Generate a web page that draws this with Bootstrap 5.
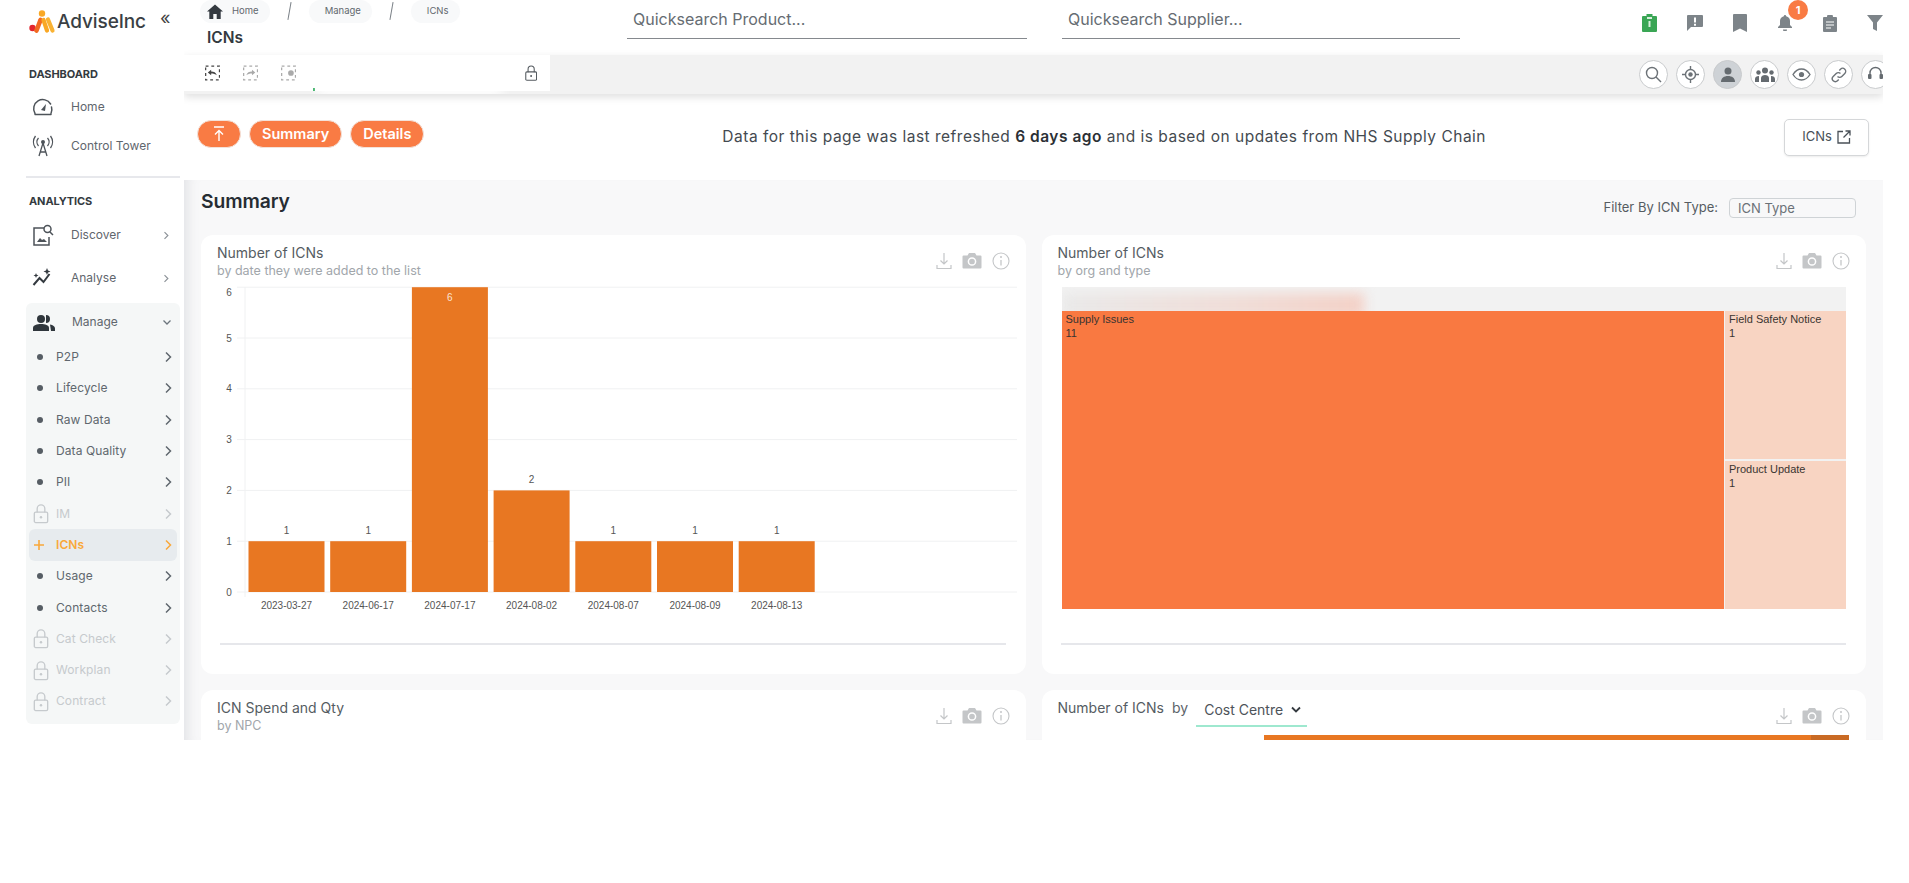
<!DOCTYPE html>
<html lang="en">
  <head>
    <meta charset="UTF-8" />
    <title>ICNs</title>
    <link rel="stylesheet" href="https://cdn.jsdelivr.net/npm/bootstrap@5.3.0/dist/css/bootstrap.min.css" />
    <style>
      body { background: #fff; font-family: Inter, "Noto Sans", sans-serif; color: #343a40; overflow: hidden; }
      .app-frame { width: 1883px; height: 740px; overflow: hidden; }

      /* sidebar */
      .side-bar { width: 184px; flex: none; background: #fff; padding: 0 4px 0 26px; position: relative; z-index: 3; }
      .logo-row { height: 64px; padding: 10px 0 0 3px; }
      .logo-word { font-size: 19px; font-weight: 500; color: #3a3f44; line-height: 24px; letter-spacing: -.1px; }
      .collapse-mark { font-size: 18px; line-height: 18px; color: #444; margin-left: 14px; margin-top: -1px; }
      .side-label { height: 20px; line-height: 20px; font-size: 11px; font-weight: 700; color: #343a40; padding-left: 3px; letter-spacing: -.1px; }
      .side-row { font-size: 12px; color: #5f666d; display: flex; align-items: center; }
      .side-row.short { height: 39px; }
      .side-row.tall { height: 43px; }
      .side-icon { width: 45px; padding-left: 6px; flex: none; }
      .side-first { margin-top: 3px; }
      .side-chev { margin-left: auto; margin-right: 11px; color: #8a9096; }
      .side-rule { height: 2px; background: #e7e8ec; margin: 10.5px 0 13px; }
      .side-panel { background: #f5f7f7; border-radius: 6px; margin-top: 3px; padding-bottom: 7px; width: 154px; }
      .panel-head { height: 39px; font-size: 12px; color: #5f666d; display: flex; align-items: center; padding-left: 7px; }
      .panel-icon { margin-right: 17px; flex: none; }
      .sub-row { height: 31.3px; margin: 0 3px; padding: 0 5px 0 4px; display: flex; align-items: center; font-size: 12px; letter-spacing: .1px; color: #60676e; border-radius: 6px; }
      .sub-mark { width: 23px; flex: none; display: flex; justify-content: flex-start; }
      .sub-dot { width: 6px; height: 6px; border-radius: 50%; background: #565d64; margin-left: 4px; }
      .sub-row.off { color: #c6cacd; }
      .sub-row.on { background: #e7ebee; color: #f9a83a; font-weight: 600; }
      .sub-end { margin-left: auto; }

      /* top */
      .main-col { min-width: 0; }
      .top-head { height: 55px; }
      .crumb-col { width: 443px; flex: none; padding-left: 16px; }
      .crumb-chip { height: 23px; background: #f8f9fa; border-radius: 12px; font-size: 9.5px; color: #62686e; padding: 0 11px 0 7px; display: flex; align-items: center; gap: 9px; }
      .crumb-slash { width: 1px; height: 18px; background: #7c8288; transform: rotate(10deg); margin: 0 19px; align-self: flex-start; margin-top: 2px; }
      .page-name { font-size: 15.5px; font-weight: 600; color: #343a40; padding: 6px 0 0 7px; line-height: 18px; }
      .quick-find { height: 39px; border-bottom: 1px solid #85898e; font-size: 16px; color: #666c72; padding: 9px 0 0 6px; line-height: 20px; }
      .find-one { width: 400px; margin-right: 35px; }
      .find-two { width: 398px; }
      .top-tools { margin-left: auto; margin-right: -14px; height: 46px; }
      .tool-slot { width: 45px; display: flex; justify-content: center; position: relative; }
      .bell-count { position: absolute; top: -15px; right: -1px; width: 20px; height: 20px; border-radius: 50%; background: #f97b44; color: #fff; font-size: 11px; font-weight: 700; line-height: 20px; text-align: center; }

      .tab-strip { height: 39px; background: #f2f2f2; box-shadow: 0 3px 8px rgba(0, 0, 0, .13); position: relative; z-index: 2; overflow: hidden; }
      .tab-white { width: 366px; flex: none; background: #fff; display: flex; align-items: center; padding-left: 21px; gap: 23px; height: 36px; align-self: flex-start; }
      .tab-fade { width: 195px; height: 46px; background: #fff; filter: blur(6px); }
      .tab-start { width: 2px; height: 3px; background: #16a34a; align-self: flex-end; margin: 0 -21px 0 -6px; }
      .tab-lock { margin-left: auto; margin-right: 13px; color: #555b60; }
      .round-set { margin-left: auto; margin-right: -7px; gap: 8px; }
      .round-tool { width: 29px; height: 29px; border-radius: 50%; background: #fff; border: 1px solid #c9cbcd; display: flex; align-items: center; justify-content: center; flex: none; }
      .round-tool.picked { background: #ced2d6; }

      .info-row { height: 86px; background: #fff; padding: 0 14px 0 13px; }
      .pill-set { gap: 8px; margin-bottom: 6px; }
      .orange-pill { height: 28px; border-radius: 14px; background: #f97b44; color: #fff; font-size: 14.5px; font-weight: 600; padding: 0 12px; border: 1px solid #f3e2da; display: flex; align-items: center; }
      .orange-pill.arrow { width: 44px; justify-content: center; padding: 0; }
      .fresh-note { font-size: 15.5px; letter-spacing: .5px; color: #444a50; }
      .fresh-note b { font-weight: 600; color: #2b3035; }
      .open-btn { width: 85px; height: 37px; background: #fff; border: 1px solid #d5d7d9; border-radius: 5px; font-size: 13px; color: #495057; display: flex; align-items: center; justify-content: center; gap: 5px; box-shadow: 0 1px 2px rgba(0, 0, 0, .08); }

      /* body */
      .gray-body { background: #f8f8f9; padding: 0 17px; box-shadow: inset 14px 0 12px -10px rgba(120, 125, 135, .16); height: 560px; overflow: hidden; }
      .section-row { height: 55px; }
      .section-name { font-size: 19.3px; font-weight: 600; color: #262c33; margin-top: -12px; letter-spacing: -.1px; }
      .filter-name { font-size: 13px; color: #565c62; margin-left: auto; margin-right: 11px; }
      .filter-box { width: 127px; height: 20px; border: 1px solid #cfd3d6; border-radius: 4px; font-size: 13px; color: #6b7177; padding-left: 8px; line-height: 18px; margin-right: 10px; }
      .chart-card { height: 439px; border: 0; border-radius: 12px; }
      .chart-top { height: 52px; padding: 9px 16px 0; }
      .chart-title { font-size: 14px; font-weight: 400; color: #555c62; line-height: 18px; }
      .chart-sub { font-size: 12.5px; color: #a1a6ab; line-height: 17px; }
      .chart-tools { margin-left: auto; gap: 10px; padding: 8px 0 0 0; color: #c4c6c8; }
      .chart-rule { height: 2px; background: #e6e7eb; margin: 0 20px 0 19px; }
      .bar-chart { display: block; width: 100%; height: 356px; overflow: visible; font-family: "Liberation Sans", sans-serif; }
      .tree-map { height: 322px; margin: 0 20px 34px 20px; background: #f2f2f2; }
      .tree-top { height: 24px; overflow: hidden; }
      .tree-smear { width: 302px; height: 24px; background: linear-gradient(90deg, #e9e9e9, #f0dcd6 60%, #f3d0c6); filter: blur(6px); margin-top: 6px; }
      .tree-main { flex: 1; background: #f97941; }
      .tree-side { width: 121px; margin-left: 1px; gap: 2px; }
      .tree-cell { flex: 1; background: #f8d4c2; }
      .tree-text { font-family: "Liberation Sans", sans-serif; font-size: 11px; color: #3a3431; padding: 1px 4px; line-height: 14px; }
      .by-word { font-size: 14px; color: #5d646a; margin: 0 8px 0 8px; line-height: 18px; }
      .pick-under { width: 111px; height: 28px; border-bottom: 2px solid #9ee8cf; font-size: 14px; color: #4d5359; padding: 0 0 5px 8px; display: flex; align-items: center; gap: 8px; }
      .cut-bar { height: 5px; background: #e87722; margin: -7px 17px 0 222px; display: flex; justify-content: flex-end; }
      .cut-bar i { width: 38px; height: 5px; background: #c96a24; }
    </style>
  </head>
  <body>
    <svg width="0" height="0" class="d-block">
      <defs>
        <symbol id="ic-lock" viewBox="0 0 16 22"><path d="M4 10V6a4 4 0 0 1 8 0v4" fill="none" stroke="currentColor" stroke-width="1.4"/><rect x="1" y="9.5" width="14" height="11" rx="1.5" fill="none" stroke="currentColor" stroke-width="1.4"/><circle cx="8" cy="15" r="1.3" fill="currentColor"/></symbol>
        <symbol id="ic-chev" viewBox="0 0 8 12"><path d="M2 1.5 6.5 6 2 10.5" fill="none" stroke="currentColor" stroke-width="1.5"/></symbol>
        <symbol id="ic-down" viewBox="0 0 16 18"><path d="M8 1v11M4.500 8.500 8 12l3.500-3.500M1 13v3.500h14V13" fill="none" stroke="currentColor" stroke-width="1.2"/></symbol>
        <symbol id="ic-cam" viewBox="0 0 20 17"><path d="M1.500 3.500h4L7 1h6l1.500 2.500h4a1 1 0 0 1 1 1v11a1 1 0 0 1-1 1h-17a1 1 0 0 1-1-1v-11a1 1 0 0 1 1-1Z" fill="currentColor"/><circle cx="10" cy="9.500" r="3.600" fill="none" stroke="#fff" stroke-width="1.500"/></symbol>
        <symbol id="ic-info" viewBox="0 0 18 18"><circle cx="9" cy="9" r="8" fill="none" stroke="currentColor" stroke-width="1.100"/><path d="M9 8v5.500" stroke="currentColor" stroke-width="1.300"/><circle cx="9" cy="5" r="1" fill="currentColor"/></symbol>
      </defs>
    </svg>

    <div class="app-frame d-flex">
      <aside class="side-bar">
        <div class="logo-row d-flex align-items-start">
          <svg width="28" height="24" viewBox="0 0 28 24">
            <circle cx="13" cy="3.500" r="3.200" fill="#f9a825"/>
            <circle cx="3.500" cy="18" r="3.200" fill="#e3262e"/>
            <path d="M7.500 20.500 11.500 10" stroke="#f26a21" stroke-width="4.600" stroke-linecap="round"/>
            <path d="M14.500 10 18 20.500" stroke="#f9a825" stroke-width="4.200" stroke-linecap="round"/>
            <path d="M19 9.500 23.500 20.500" stroke="#f9b233" stroke-width="4.200" stroke-linecap="round"/>
          </svg>
          <span class="logo-word">AdviseInc</span>
          <span class="collapse-mark">«</span>
        </div>
        <div class="side-label">DASHBOARD</div>
        <div class="side-row short side-first">
          <span class="side-icon"><svg width="22" height="20" viewBox="0 0 22 20"><path d="M3 16.500a9 9 0 1 1 15.600-9.500M19.500 10a9 9 0 0 1-.5 6.500M3 17.500h16" fill="none" stroke="#4d5359" stroke-width="1.500" stroke-linecap="round"/><path d="m9 13 5-6-1 7Z" fill="#4d5359"/></svg></span>Home
        </div>
        <div class="side-row short">
          <span class="side-icon"><svg width="22" height="22" viewBox="0 0 22 22"><circle cx="11" cy="7" r="2" fill="#4d5359"/><path d="m11 8-4 13M11 8l4 13M8 17h6M6.500 3a6 6 0 0 0 0 8M15.500 3a6 6 0 0 1 0 8M3.500 1a10 10 0 0 0 0 12M18.500 1a10 10 0 0 1 0 12" fill="none" stroke="#4d5359" stroke-width="1.300"/></svg></span>Control Tower
        </div>
        <div class="side-rule"></div>
        <div class="side-label">ANALYTICS</div>
        <div class="side-row tall side-first">
          <span class="side-icon"><svg width="22" height="22" viewBox="0 0 22 22"><path d="M12 4H2v17h15v-8" fill="none" stroke="#4d5359" stroke-width="1.500"/><circle cx="15.500" cy="5" r="3.500" fill="none" stroke="#4d5359" stroke-width="1.500"/><path d="m18 8 3 3" stroke="#4d5359" stroke-width="1.500"/><path d="m5 18 3-4 2 2 2-1 3 3Z" fill="#4d5359"/></svg></span>Discover
          <svg width="6" height="9" class="side-chev"><use href="#ic-chev"/></svg>
        </div>
        <div class="side-row tall">
          <span class="side-icon"><svg width="22" height="20" viewBox="0 0 22 20"><path d="m1.500 17 6-7 4 4 6-8" fill="none" stroke="#343a40" stroke-width="2"/><path d="m15 0 1 2.500 2.500 1-2.500 1-1 2.500-1-2.500-2.500-1 2.500-1ZM4 5l.7 1.800 1.800.7-1.800.7L4 10l-.7-1.800-1.800-.7 1.800-.7Z" fill="#343a40"/></svg></span>Analyse
          <svg width="6" height="9" class="side-chev"><use href="#ic-chev"/></svg>
        </div>
        <div class="side-panel">
          <div class="panel-head">
            <svg width="22" height="17" viewBox="0 0 22 17" class="panel-icon"><circle cx="8" cy="5" r="4" fill="#2f363c"/><path d="M0 17v-3c0-3 4-4 8-4s8 1 8 4v3Z" fill="#2f363c"/><path d="M13 1a4 4 0 0 1 0 8M17 10.500c3 .5 5 2 5 4V17h-4" fill="#2f363c"/></svg>
            Manage
            <svg width="10" height="7" viewBox="0 0 10 7" class="sub-end me-2 text-secondary"><path d="m1.500 1.500 3.500 3.500 3.500-3.500" fill="none" stroke="currentColor" stroke-width="1.300"/></svg>
          </div>
          <div class="sub-row"><span class="sub-mark"><i class="sub-dot"></i></span>P2P<svg width="8" height="12" class="sub-end"><use href="#ic-chev"/></svg></div>
          <div class="sub-row"><span class="sub-mark"><i class="sub-dot"></i></span>Lifecycle<svg width="8" height="12" class="sub-end"><use href="#ic-chev"/></svg></div>
          <div class="sub-row"><span class="sub-mark"><i class="sub-dot"></i></span>Raw Data<svg width="8" height="12" class="sub-end"><use href="#ic-chev"/></svg></div>
          <div class="sub-row"><span class="sub-mark"><i class="sub-dot"></i></span>Data Quality<svg width="8" height="12" class="sub-end"><use href="#ic-chev"/></svg></div>
          <div class="sub-row"><span class="sub-mark"><i class="sub-dot"></i></span>PII<svg width="8" height="12" class="sub-end"><use href="#ic-chev"/></svg></div>
          <div class="sub-row off"><span class="sub-mark"><svg width="16" height="21"><use href="#ic-lock"/></svg></span>IM<svg width="8" height="12" class="sub-end"><use href="#ic-chev"/></svg></div>
          <div class="sub-row on"><span class="sub-mark"><svg width="12" height="12" viewBox="0 0 12 12"><path d="M6 1v10M1 6h10" stroke="#f9a83a" stroke-width="1.600"/></svg></span>ICNs<svg width="8" height="12" class="sub-end"><use href="#ic-chev"/></svg></div>
          <div class="sub-row"><span class="sub-mark"><i class="sub-dot"></i></span>Usage<svg width="8" height="12" class="sub-end"><use href="#ic-chev"/></svg></div>
          <div class="sub-row"><span class="sub-mark"><i class="sub-dot"></i></span>Contacts<svg width="8" height="12" class="sub-end"><use href="#ic-chev"/></svg></div>
          <div class="sub-row off"><span class="sub-mark"><svg width="16" height="21"><use href="#ic-lock"/></svg></span>Cat Check<svg width="8" height="12" class="sub-end"><use href="#ic-chev"/></svg></div>
          <div class="sub-row off"><span class="sub-mark"><svg width="16" height="21"><use href="#ic-lock"/></svg></span>Workplan<svg width="8" height="12" class="sub-end"><use href="#ic-chev"/></svg></div>
          <div class="sub-row off"><span class="sub-mark"><svg width="16" height="21"><use href="#ic-lock"/></svg></span>Contract<svg width="8" height="12" class="sub-end"><use href="#ic-chev"/></svg></div>
        </div>
      </aside>

      <main class="main-col flex-grow-1">
        <div class="top-head d-flex align-items-start">
          <div class="crumb-col">
            <div class="d-flex">
              <span class="crumb-chip"><svg width="16" height="15" viewBox="0 0 16 15"><path d="M8 .5 0 7.500h2.300V15h4v-5h3.400v5h4V7.500H16Z" fill="#343a40"/></svg>Home</span>
              <i class="crumb-slash"></i>
              <span class="crumb-chip ps-3">Manage</span>
              <i class="crumb-slash"></i>
              <span class="crumb-chip ps-3">ICNs</span>
            </div>
            <div class="page-name">ICNs</div>
          </div>
          <div class="quick-find find-one">Quicksearch Product...</div>
          <div class="quick-find find-two">Quicksearch Supplier...</div>
          <div class="top-tools d-flex align-items-center">
            <span class="tool-slot"><svg width="15" height="18" viewBox="0 0 15 18"><path d="M1 2h3.500V0h6v2H14a1 1 0 0 1 1 1v14a1 1 0 0 1-1 1H1a1 1 0 0 1-1-1V3a1 1 0 0 1 1-1Z" fill="#3aa655"/><path d="M5 3h5v2H5zM6.500 7h2v6h-2z" fill="#d8efdd"/></svg></span>
            <span class="tool-slot"><svg width="16" height="16" viewBox="0 0 16 16"><path d="M1 0h14a1 1 0 0 1 1 1v10a1 1 0 0 1-1 1H4l-4 4V1a1 1 0 0 1 1-1Z" fill="#7d8489"/><path d="M7 2.500h2v5H7zM7 8.800h2v2H7z" fill="#fff"/></svg></span>
            <span class="tool-slot"><svg width="14" height="18" viewBox="0 0 14 18"><path d="M1 0h12a1 1 0 0 1 1 1v17l-7-3.500L0 18V1a1 1 0 0 1 1-1Z" fill="#7d8489"/></svg></span>
            <span class="tool-slot"><svg width="14" height="16" viewBox="0 0 14 16"><path d="M7 0a1.200 1.200 0 0 1 1.200 1.200 5 5 0 0 1 3.800 4.800v4l2 2v1H0v-1l2-2V6a5 5 0 0 1 3.800-4.800A1.200 1.200 0 0 1 7 0ZM5 14.500h4a2 2 0 0 1-4 0Z" fill="#7d8489"/></svg><span class="bell-count">1</span></span>
            <span class="tool-slot"><svg width="14" height="17" viewBox="0 0 14 17"><path d="M1 2h3a3 3 0 0 1 6 0h3a1 1 0 0 1 1 1v13a1 1 0 0 1-1 1H1a1 1 0 0 1-1-1V3a1 1 0 0 1 1-1Z" fill="#7d8489"/><path d="M3 7h8M3 10h8M3 13h5" stroke="#fff" stroke-width="1.200"/></svg></span>
            <span class="tool-slot"><svg width="16" height="16" viewBox="0 0 16 16"><path d="M0 0h16l-6 7.500V16l-4-2V7.500Z" fill="#7d8489"/></svg></span>
          </div>
        </div>

        <div class="tab-strip d-flex align-items-center">
          <div class="tab-white">
            <svg width="16" height="16" viewBox="0 0 16 16"><rect x=".7" y=".7" width="14.600" height="14.600" fill="none" stroke="#444" stroke-width="1.300" stroke-dasharray="3 3"/><path d="M3 7.500 6.500 4.500v2c3 0 5 1 6 4-1.500-1.500-3.500-2-6-2v2Z" fill="#444"/></svg>
            <svg width="16" height="16" viewBox="0 0 16 16"><rect x=".7" y=".7" width="14.600" height="14.600" fill="none" stroke="#aaa" stroke-width="1.300" stroke-dasharray="3 3"/><path d="M13 7.500 9.500 4.500v2c-3 0-5 1-6 4 1.500-1.500 3.500-2 6-2v2Z" fill="#aaa"/></svg>
            <svg width="16" height="16" viewBox="0 0 16 16"><rect x=".7" y=".7" width="14.600" height="14.600" fill="none" stroke="#aaa" stroke-width="1.300" stroke-dasharray="3 3"/><circle cx="10.500" cy="8" r="3" fill="#aaa"/></svg>
            <i class="tab-start"></i>
            <div class="tab-fade"></div>
            <svg width="13" height="18" class="tab-lock"><use href="#ic-lock"/></svg>
          </div>
          <div class="round-set d-flex">
            <span class="round-tool"><svg width="17" height="17" viewBox="0 0 17 17"><circle cx="7" cy="7" r="5.500" fill="none" stroke="#6c7277" stroke-width="1.400"/><path d="m11 11 5 5" stroke="#6c7277" stroke-width="1.400"/></svg></span>
            <span class="round-tool"><svg width="17" height="17" viewBox="0 0 17 17"><circle cx="8.500" cy="8.500" r="5" fill="none" stroke="#6c7277" stroke-width="1.400"/><circle cx="8.500" cy="8.500" r="2.200" fill="#6c7277"/><path d="M8.500 0v3M8.500 14v3M0 8.500h3M14 8.500h3" stroke="#6c7277" stroke-width="1.400"/></svg></span>
            <span class="round-tool picked"><svg width="16" height="16" viewBox="0 0 16 16"><circle cx="8" cy="4" r="3.500" fill="#656b70"/><path d="M1 15c0-4 3-6 7-6s7 2 7 6Z" fill="#656b70"/></svg></span>
            <span class="round-tool"><svg width="20" height="15" viewBox="0 0 20 15"><circle cx="10" cy="3.500" r="3" fill="#656b70"/><circle cx="3.500" cy="5.500" r="2.200" fill="#656b70"/><circle cx="16.500" cy="5.500" r="2.200" fill="#656b70"/><path d="M6 15v-4c0-2 2-3 4-3s4 1 4 3v4ZM0 15v-3c0-2 1.500-3 4-3v6ZM20 15v-3c0-2-1.500-3-4-3v6Z" fill="#656b70"/></svg></span>
            <span class="round-tool"><svg width="19" height="13" viewBox="0 0 19 13"><path d="M1 6.500C3.500 2.500 6.500 1 9.500 1s6 1.500 8.500 5.500C15.500 10.500 12.500 12 9.500 12S3.500 10.500 1 6.500Z" fill="none" stroke="#6c7277" stroke-width="1.400"/><circle cx="9.500" cy="6.500" r="2.600" fill="#6c7277"/></svg></span>
            <span class="round-tool"><svg width="16" height="16" viewBox="0 0 16 16"><path d="M6.500 9.500a3 3 0 0 0 4.300 0l3-3a3 3 0 0 0-4.300-4.300L8.300 3.400M9.500 6.500a3 3 0 0 0-4.300 0l-3 3a3 3 0 0 0 4.300 4.300l1.200-1.200" fill="none" stroke="#6c7277" stroke-width="1.400"/></svg></span>
            <span class="round-tool"><svg width="17" height="17" viewBox="0 0 17 17"><path d="M3 9V7a5.500 5.500 0 0 1 11 0v2" fill="none" stroke="#656b70" stroke-width="1.400"/><rect x="1" y="8" width="3.500" height="5" rx="1" fill="#656b70"/><rect x="12.500" y="8" width="3.500" height="5" rx="1" fill="#656b70"/></svg></span>
          </div>
        </div>

        <div class="info-row d-flex align-items-center">
          <div class="pill-set d-flex">
            <span class="orange-pill arrow"><svg width="14" height="16" viewBox="0 0 14 16"><path d="M2 1h10M7 15V5M3 8.500 7 4.500l4 4" fill="none" stroke="#fff" stroke-width="1.400"/></svg></span>
            <span class="orange-pill">Summary</span>
            <span class="orange-pill">Details</span>
          </div>
          <div class="fresh-note flex-grow-1 text-center">Data for this page was last refreshed <b>6 days ago</b> and is based on updates from NHS Supply Chain</div>
          <span class="open-btn">ICNs <svg width="14" height="14" viewBox="0 0 14 14"><path d="M6 1.500H1v11.500h11.500V8M8.500 1H13v4.500M13 1 6.500 7.500" fill="none" stroke="#495057" stroke-width="1.300"/></svg></span>
        </div>

        <div class="gray-body">
          <div class="section-row d-flex align-items-center">
            <div class="section-name">Summary</div>
            <div class="filter-name">Filter By ICN Type:</div>
            <div class="filter-box">ICN Type</div>
          </div>
          <div class="row g-3">
            <div class="col-6">
              <div class="card chart-card">
                <div class="chart-top d-flex">
                  <div>
                    <div class="chart-title">Number of ICNs</div>
                    <div class="chart-sub">by date they were added to the list</div>
                  </div>
                  <div class="chart-tools d-flex align-items-start">
                    <svg width="16" height="18"><use href="#ic-down"/></svg>
                    <svg width="20" height="17"><use href="#ic-cam"/></svg>
                    <svg width="18" height="18"><use href="#ic-info"/></svg>
                  </div>
                </div>
                <svg class="bar-chart" id="dateChart"></svg>
                <div class="chart-rule"></div>
              </div>
            </div>
            <div class="col-6">
              <div class="card chart-card">
                <div class="chart-top d-flex">
                  <div>
                    <div class="chart-title">Number of ICNs</div>
                    <div class="chart-sub">by org and type</div>
                  </div>
                  <div class="chart-tools d-flex align-items-start">
                    <svg width="16" height="18"><use href="#ic-down"/></svg>
                    <svg width="20" height="17"><use href="#ic-cam"/></svg>
                    <svg width="18" height="18"><use href="#ic-info"/></svg>
                  </div>
                </div>
                <div class="tree-map d-flex flex-column">
                  <div class="tree-top"><div class="tree-smear"></div></div>
                  <div class="d-flex flex-grow-1">
                    <div class="tree-main tree-text">Supply Issues<br />11</div>
                    <div class="tree-side d-flex flex-column">
                      <div class="tree-cell tree-text">Field Safety Notice<br />1</div>
                      <div class="tree-cell tree-text">Product Update<br />1</div>
                    </div>
                  </div>
                </div>
                <div class="chart-rule"></div>
              </div>
            </div>
            <div class="col-6">
              <div class="card chart-card">
                <div class="chart-top d-flex">
                  <div>
                    <div class="chart-title">ICN Spend and Qty</div>
                    <div class="chart-sub">by NPC</div>
                  </div>
                  <div class="chart-tools d-flex align-items-start">
                    <svg width="16" height="18"><use href="#ic-down"/></svg>
                    <svg width="20" height="17"><use href="#ic-cam"/></svg>
                    <svg width="18" height="18"><use href="#ic-info"/></svg>
                  </div>
                </div>
              </div>
            </div>
            <div class="col-6">
              <div class="card chart-card">
                <div class="chart-top d-flex">
                  <div class="d-flex align-items-start">
                    <div class="chart-title">Number of ICNs</div>
                    <span class="by-word">by</span>
                    <span class="pick-under">Cost Centre <svg width="10" height="7" viewBox="0 0 10 7"><path d="m1 1.500 4 4 4-4" fill="none" stroke="#343a40" stroke-width="1.800"/></svg></span>
                  </div>
                  <div class="chart-tools d-flex align-items-start">
                    <svg width="16" height="18"><use href="#ic-down"/></svg>
                    <svg width="20" height="17"><use href="#ic-cam"/></svg>
                    <svg width="18" height="18"><use href="#ic-info"/></svg>
                  </div>
                </div>
                <div class="cut-bar"><i></i></div>
              </div>
            </div>
          </div>
        </div>
      </main>
    </div>

    <script src="https://cdn.jsdelivr.net/npm/bootstrap@5.3.0/dist/js/bootstrap.bundle.min.js"></script>
    <script>
      // draw the date chart
      const dates = [
        ["2023-03-27", 1],
        ["2024-06-17", 1],
        ["2024-07-17", 6],
        ["2024-08-02", 2],
        ["2024-08-07", 1],
        ["2024-08-09", 1],
        ["2024-08-13", 1],
      ];
      const stepY = 50.8;
      const zeroY = 305;
      let out = "";
      for (let i = 0; i <= 6; i++) {
        const y = zeroY - i * stepY;
        // top tick label sits just inside the plot
        const labelY = i === 6 ? 9 : y + 3.5;
        out += `<line x1="36" x2="816" y1="${y}" y2="${y}" stroke="#f0f1f2"/>`;
        out += `<text x="28" y="${labelY}" text-anchor="middle" font-size="10" fill="#555">${i}</text>`;
      }
      out += `<line x1="44" x2="44" y1="0" y2="310" stroke="#f0f1f2"/>`;
      dates.forEach(([label, val], i) => {
        const x = 47.5 + i * 81.7;
        const h = val * stepY;
        const y = zeroY - h;
        out += `<rect x="${x}" y="${y}" width="76" height="${h}" fill="#e87722"/>`;
        const inside = val === 6;
        out += `<text x="${x + 38}" y="${inside ? y + 14 : y - 7}" text-anchor="middle" font-size="10" fill="${inside ? "#fbe3d0" : "#555"}">${val}</text>`;
        out += `<text x="${x + 38}" y="${zeroY + 17}" text-anchor="middle" font-size="10" fill="#555">${label}</text>`;
      });
      document.getElementById("dateChart").innerHTML = out;
    </script>
  </body>
</html>
